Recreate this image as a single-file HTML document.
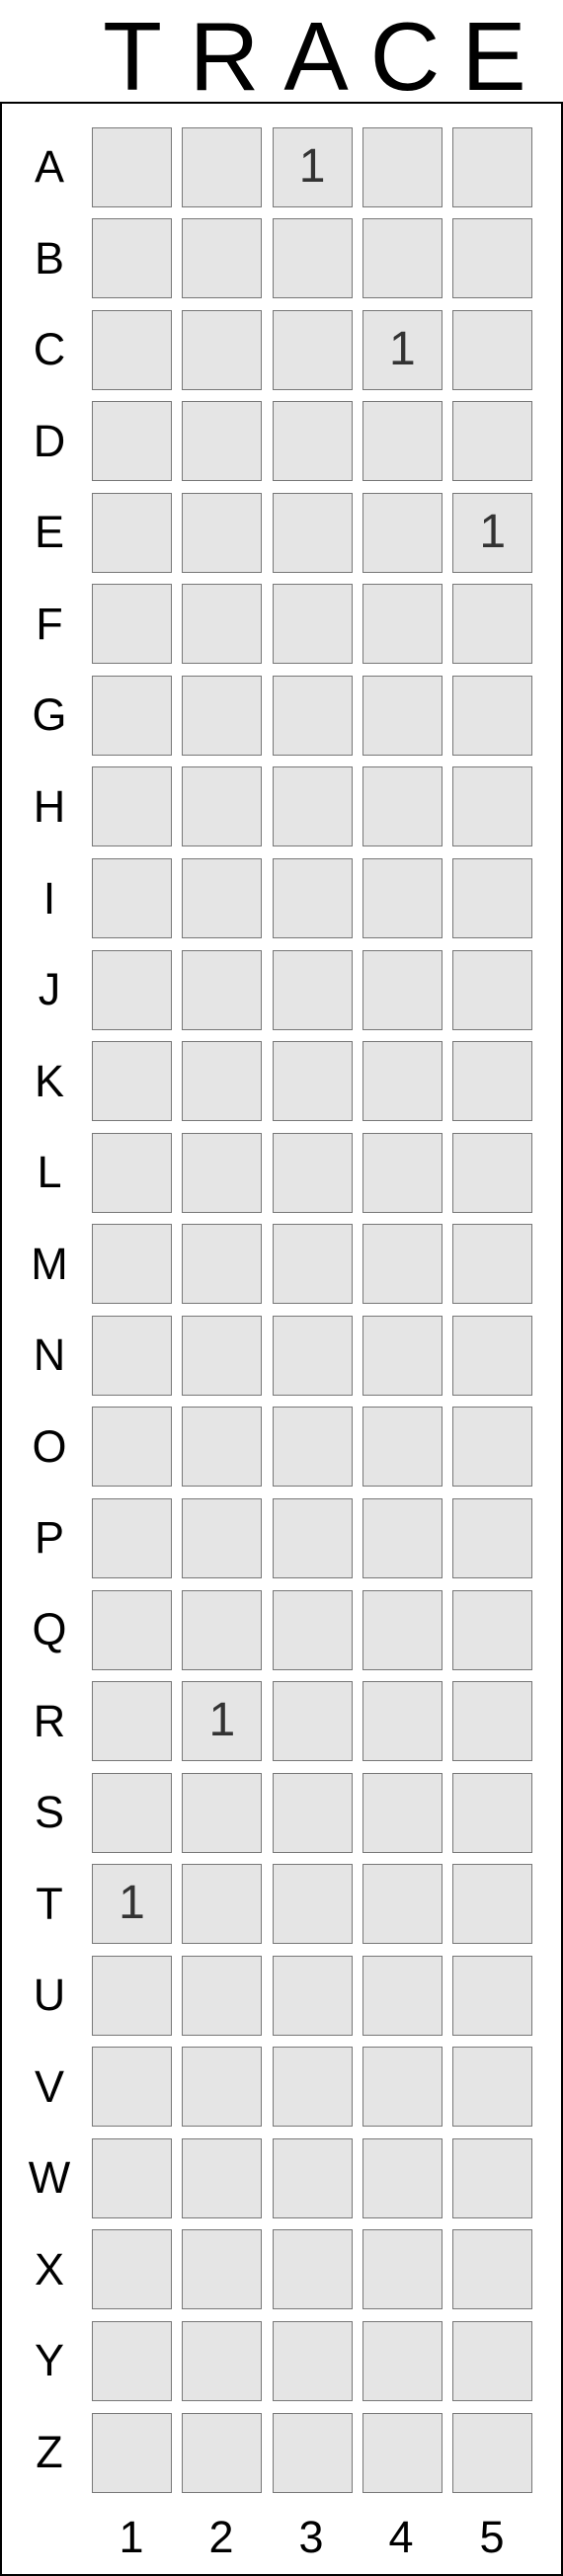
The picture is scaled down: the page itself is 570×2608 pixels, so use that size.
<!DOCTYPE html>
<html><head><meta charset="utf-8"><style>
html,body{margin:0;padding:0;background:#fff;width:570px;height:2608px;overflow:hidden;font-family:"Liberation Sans",Arial,sans-serif}
.t{position:absolute;top:8px;font-size:98px;line-height:98px;width:100px;text-align:center;color:#000}
.box{position:absolute;left:0;top:103px;width:566px;height:2501px;border:2px solid #000}
.r{position:absolute;left:0;height:80px;display:flex;align-items:center}
.r b{font-weight:normal;width:80px;margin-left:10px;margin-right:3px;text-align:center;font-size:45px;color:#000}
.r i{font-style:normal;display:block;box-sizing:border-box;width:81px;height:81px;border:1px solid #777;background:#e5e5e5;margin-right:10.3px;text-align:center;line-height:78px;font-size:48px;color:#333}
.n{position:absolute;top:2546px;font-size:45px;line-height:45px;width:80px;text-align:center}
</style></head><body>
<div class="t" style="left:84px">T</div>
<div class="t" style="left:177px">R</div>
<div class="t" style="left:270px">A</div>
<div class="t" style="left:360px">C</div>
<div class="t" style="left:450px">E</div>
<div class="box"></div>
<div class="r" style="top:129px"><b>A</b><i></i><i></i><i>1</i><i></i><i></i></div>
<div class="r" style="top:221.6px"><b>B</b><i></i><i></i><i></i><i></i><i></i></div>
<div class="r" style="top:314.1px"><b>C</b><i></i><i></i><i></i><i>1</i><i></i></div>
<div class="r" style="top:406.7px"><b>D</b><i></i><i></i><i></i><i></i><i></i></div>
<div class="r" style="top:499.2px"><b>E</b><i></i><i></i><i></i><i></i><i>1</i></div>
<div class="r" style="top:591.8px"><b>F</b><i></i><i></i><i></i><i></i><i></i></div>
<div class="r" style="top:684.4px"><b>G</b><i></i><i></i><i></i><i></i><i></i></div>
<div class="r" style="top:776.9px"><b>H</b><i></i><i></i><i></i><i></i><i></i></div>
<div class="r" style="top:869.5px"><b>I</b><i></i><i></i><i></i><i></i><i></i></div>
<div class="r" style="top:962px"><b>J</b><i></i><i></i><i></i><i></i><i></i></div>
<div class="r" style="top:1054.6px"><b>K</b><i></i><i></i><i></i><i></i><i></i></div>
<div class="r" style="top:1147.2px"><b>L</b><i></i><i></i><i></i><i></i><i></i></div>
<div class="r" style="top:1239.7px"><b>M</b><i></i><i></i><i></i><i></i><i></i></div>
<div class="r" style="top:1332.3px"><b>N</b><i></i><i></i><i></i><i></i><i></i></div>
<div class="r" style="top:1424.8px"><b>O</b><i></i><i></i><i></i><i></i><i></i></div>
<div class="r" style="top:1517.4px"><b>P</b><i></i><i></i><i></i><i></i><i></i></div>
<div class="r" style="top:1610px"><b>Q</b><i></i><i></i><i></i><i></i><i></i></div>
<div class="r" style="top:1702.5px"><b>R</b><i></i><i>1</i><i></i><i></i><i></i></div>
<div class="r" style="top:1795.1px"><b>S</b><i></i><i></i><i></i><i></i><i></i></div>
<div class="r" style="top:1887.6px"><b>T</b><i>1</i><i></i><i></i><i></i><i></i></div>
<div class="r" style="top:1980.2px"><b>U</b><i></i><i></i><i></i><i></i><i></i></div>
<div class="r" style="top:2072.8px"><b>V</b><i></i><i></i><i></i><i></i><i></i></div>
<div class="r" style="top:2165.3px"><b>W</b><i></i><i></i><i></i><i></i><i></i></div>
<div class="r" style="top:2257.9px"><b>X</b><i></i><i></i><i></i><i></i><i></i></div>
<div class="r" style="top:2350.4px"><b>Y</b><i></i><i></i><i></i><i></i><i></i></div>
<div class="r" style="top:2443px"><b>Z</b><i></i><i></i><i></i><i></i><i></i></div>
<div class="n" style="left:93px">1</div>
<div class="n" style="left:184px">2</div>
<div class="n" style="left:275px">3</div>
<div class="n" style="left:366px">4</div>
<div class="n" style="left:458px">5</div>
</body></html>
